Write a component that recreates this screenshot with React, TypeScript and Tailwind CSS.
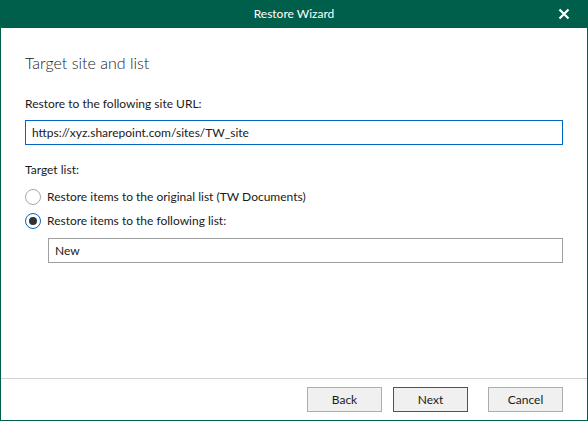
import React, { useState } from 'react';

const font = { fontFamily: 'Lato, "Liberation Sans", sans-serif' };

function Radio({ checked, label, onClick }: { checked: boolean; label: string; onClick: () => void }) {
  return (
    <button onClick={onClick} className="flex items-center h-[24px] text-left">
      <span
        className={
          checked
            ? 'w-[16px] h-[16px] rounded-full border border-[#0067c0] flex items-center justify-center bg-white'
            : 'w-[16px] h-[16px] rounded-full border border-[#a8a8a8] flex items-center justify-center bg-white'
        }
      >
        {checked && <span className="w-[8px] h-[8px] rounded-full bg-[#333333]" />}
      </span>
      <span className="ml-[6px] text-[12px] leading-[16px] text-[#1a1a1a]">{label}</span>
    </button>
  );
}

export default function App() {
  const [target, setTarget] = useState<'original' | 'other'>('other');
  const [siteUrl, setSiteUrl] = useState('https://xyz.sharepoint.com/sites/TW_site');
  const [listName, setListName] = useState('New');

  return (
    <div style={font} className="w-[588px] h-[421px] flex flex-col bg-[#005f4b] px-px pb-px">
      {/* title bar */}
      <div className="h-[28px] flex items-center relative text-white text-[12px]">
        <div className="flex-1 text-center">Restore Wizard</div>
        <button className="absolute right-[17px] top-[8px] w-[12px] h-[12px]" title="Close">
          <svg viewBox="0 0 12 12" className="w-[12px] h-[12px]">
            <path d="M1.5 1.5 L10.5 10.5 M10.5 1.5 L1.5 10.5" stroke="white" strokeWidth="2.2" />
          </svg>
        </button>
      </div>

      <div className="flex-1 flex flex-col bg-white">
        <div className="flex-1 px-[24px] pt-[24px]">
          <h1 className="text-[16px] font-light text-[#222222] leading-[22px]">Target site and list</h1>

          <div className="mt-[22px] text-[12px] text-[#1a1a1a] leading-[16px]">Restore to the following site URL:</div>
          <input
            value={siteUrl}
            onChange={(e) => setSiteUrl(e.target.value)}
            className="mt-[8px] w-full h-[25px] border border-[#0067c0] px-[6px] text-[12px] text-[#1a1a1a] outline-none"
          />

          <div className="mt-[17px] text-[12px] text-[#1a1a1a] leading-[16px]">Target list:</div>
          <div className="mt-[7px] flex flex-col">
            <Radio
              checked={target === 'original'}
              label="Restore items to the original list (TW Documents)"
              onClick={() => setTarget('original')}
            />
            <Radio
              checked={target === 'other'}
              label="Restore items to the following list:"
              onClick={() => setTarget('other')}
            />
          </div>
          <div className="pl-[23px] mt-[4px]">
            <input
              value={listName}
              onChange={(e) => setListName(e.target.value)}
              className="w-full h-[25px] border border-[#a0a0a0] px-[6px] text-[12px] text-[#1a1a1a] outline-none"
            />
          </div>
        </div>

        {/* footer */}
        <div className="h-[42px] border-t border-[#d0d0d0] flex items-start justify-end pt-[8px] pr-[24px]">
          <button className="w-[75px] h-[25px] bg-[#f0f0f0] border border-[#adadad] text-[12px] text-[#1a1a1a]">
            Back
          </button>
          <button className="ml-[11px] w-[75px] h-[25px] bg-[#f0f0f0] border border-[#0067c0] text-[12px] text-[#1a1a1a]">
            Next
          </button>
          <button className="ml-[20px] w-[75px] h-[25px] bg-[#f0f0f0] border border-[#adadad] text-[12px] text-[#1a1a1a]">
            Cancel
          </button>
        </div>
      </div>
    </div>
  );
}
